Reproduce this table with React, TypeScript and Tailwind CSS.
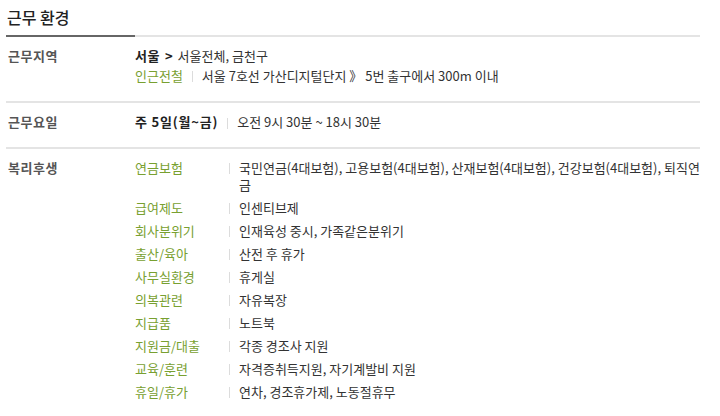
import React from 'react';

const welfare: { label: string; value: string }[] = [
  { label: '연금보험', value: '국민연금(4대보험), 고용보험(4대보험), 산재보험(4대보험), 건강보험(4대보험), 퇴직연금' },
  { label: '급여제도', value: '인센티브제' },
  { label: '회사분위기', value: '인재육성 중시, 가족같은분위기' },
  { label: '출산/육아', value: '산전 후 휴가' },
  { label: '사무실환경', value: '휴게실' },
  { label: '의복관련', value: '자유복장' },
  { label: '지급품', value: '노트북' },
  { label: '지원금/대출', value: '각종 경조사 지원' },
  { label: '교육/훈련', value: '자격증취득지원, 자기계발비 지원' },
  { label: '휴일/휴가', value: '연차, 경조휴가제, 노동절휴무' },
];

const Bar = ({ className = '' }: { className?: string }) => (
  <span className={`inline-block w-px h-[11px] bg-[#dcdcdc] shrink-0 ${className}`} />
);

const Divider = () => <div className="h-[2px] bg-[#e4e4e4]" />;

const App: React.FC = () => {
  return (
    <div className="w-[720px] h-[416px] bg-white font-['Noto_Sans_CJK_KR',sans-serif] text-[13px] text-[#333] overflow-hidden">
      <div className="w-[694px] ml-[6px]">
        <h2 className="pt-[7px] pl-[1px] text-[16px] leading-[20px] font-medium text-[#222]">근무 환경</h2>
        <div className="mt-[8px] flex h-[2px]">
          <div className="w-[129px] bg-[#666]" />
          <div className="flex-1 bg-[#e4e4e4]" />
        </div>

        {/* 근무지역 */}
        <div className="flex pt-[9px] pb-[15px] leading-[20px]">
          <div className="w-[129px] pl-[2px] font-bold text-[#555] tracking-[0.5px]">근무지역</div>
          <div className="flex-1">
            <div>
              <span className="font-bold text-[#222] tracking-[0.5px]">서울</span>
              <span className="font-bold text-[#222] mx-[5px]">&gt;</span>
              <span>서울전체, 금천구</span>
            </div>
            <div className="flex items-start">
              <span className="text-[#78a030]">인근전철</span>
              <Bar className="mt-[5px] mx-[9px]" />
              <span>서울 7호선 가산디지털단지 》 5번 출구에서 300m 이내</span>
            </div>
          </div>
        </div>
        <Divider />

        {/* 근무요일 */}
        <div className="flex pt-[9px] pb-[15px] leading-[20px]">
          <div className="w-[129px] pl-[2px] font-bold text-[#555] tracking-[0.5px]">근무요일</div>
          <div className="flex-1 flex items-start">
            <span className="font-bold text-[#222] tracking-[0.8px]">주 5일(월~금)</span>
            <Bar className="mt-[6px] mx-[9px]" />
            <span>오전 9시 30분 ~ 18시 30분</span>
          </div>
        </div>
        <Divider />

        {/* 복리후생 */}
        <div className="flex pt-[10px] leading-[17px]">
          <div className="w-[129px] pl-[2px] font-bold text-[#555] tracking-[0.5px]">복리후생</div>
          <div className="flex-1 flex flex-col gap-[6px]">
            {welfare.map((w) => (
              <div key={w.label} className="flex items-start">
                <span className="w-[94px] shrink-0 text-[#78a030]">{w.label}</span>
                <Bar className="mt-[4px]" />
                <span className="ml-[9px] flex-1">{w.value}</span>
              </div>
            ))}
          </div>
        </div>
      </div>
    </div>
  );
};

export default App;
